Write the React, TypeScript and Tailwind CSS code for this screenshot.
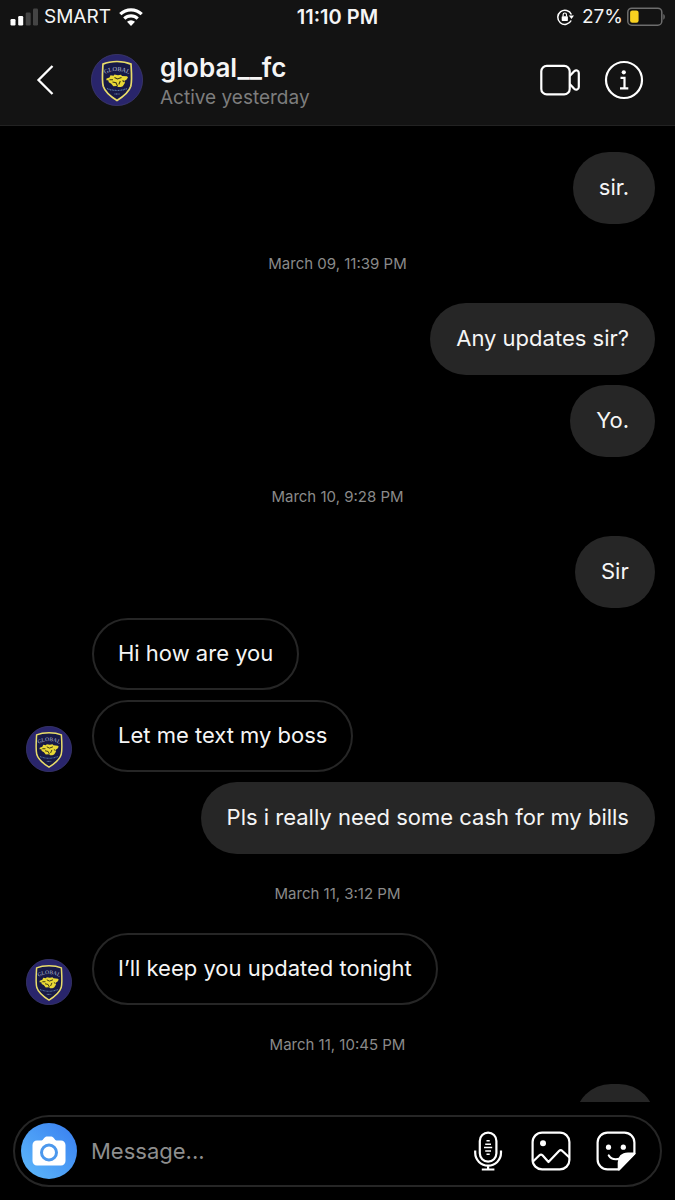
import * as React from "react";

type Message = {
    id: number;
    from?: "me" | "them";
    text?: string;
    date?: string;
    avatar?: boolean;
};

const messages: Message[] = [
    {id: 1, from: "me", text: "sir."},
    {id: 2, date: "March 09, 11:39 PM"},
    {id: 3, from: "me", text: "Any updates sir?"},
    {id: 4, from: "me", text: "Yo."},
    {id: 5, date: "March 10, 9:28 PM"},
    {id: 6, from: "me", text: "Sir"},
    {id: 7, from: "them", text: "Hi how are you"},
    {id: 8, from: "them", text: "Let me text my boss", avatar: true},
    {id: 9, from: "me", text: "Pls i really need some cash for my bills"},
    {id: 10, date: "March 11, 3:12 PM"},
    {id: 11, from: "them", text: "I’ll keep you updated tonight", avatar: true},
    {id: 12, date: "March 11, 10:45 PM"},
    {id: 13, from: "me", text: ""},
];

const ClubBadge = ({className}: {className: string}) => {
    const arcId = React.useId();
    return (
        <svg viewBox="0 0 52 52" className={className} aria-hidden="true">
            <circle cx="26" cy="26" r="25.6" fill="#29256b" stroke="#3d3a70" strokeWidth=".8"/>
            <path
                d="M26 7.500c-5.500 0-10 .8-14 2.600-.6 10-1.200 16.500.2 22.200C14 38 19.500 42.500 26 46.500c6.500-4 12-8.500 13.800-14.200 1.400-5.700.8-12.200.2-22.200-4-1.800-8.500-2.600-14-2.600Z"
                fill="#171947" stroke="#e8dc6a" strokeWidth="1.700"/>
            <path id={arcId} d="M13.500 20.500Q26 13.500 38.500 20.500" fill="none"/>
            <text fontSize="6.200" fill="#b9bfd6" textAnchor="middle" className="font-['Liberation_Serif',serif]">
                <textPath href={`#${arcId}`} startOffset="50%">GLOBAL</textPath>
            </text>
            <path
                d="M15.500 24.500l3-1 1-2.200 3 .5 1-1.300 3.500.8 3-.6 1 1.200 5 .3 1 1.300-2 2.800-1.300 0 .3 2.500-2.200 3.500-2 .7-2.500 0-1.500-1-3.500.3-2-2.500-2.500-1.500-.5-2-2 0Z"
                fill="#e9d936"/>
            <path d="M18.500 25.700h3.500M23.500 23.500l3 1.500 4-1.500M21.500 28l3.500.8 1.500 3.200M29.300 27l-1.500 3.500M31.500 26.500l2 1.500" fill="none" stroke="#3b3719" strokeWidth="1.100"/>
            <path d="M16 34.500Q26 38.500 36 34.500" fill="none" stroke="#5878a8" strokeWidth="1.200" strokeDasharray="1 .6"/>
            <path d="M23.500 40h5" stroke="#6f8ab0" strokeWidth="1" strokeDasharray="1 .5"/>
        </svg>
    );
};

const StatusBar = () => (
    <div className="grid h-[34px] grid-cols-[1fr_auto_1fr] items-center px-[10px] text-[19px] leading-6">
        <div className="flex items-center gap-1.5">
            <svg viewBox="0 0 28 18" className="h-[18px] w-7" aria-label="Signal">
                <rect x=".5" y="11" width="5" height="6.500" rx="1.200" fill="#fff"/>
                <rect x="8.200" y="8" width="5" height="9.500" rx="1.200" fill="#fff"/>
                <rect x="15.700" y="4.500" width="5" height="13" rx="1.200" fill="#444"/>
                <rect x="23" y=".5" width="5" height="17" rx="1.200" fill="#444"/>
            </svg>
            <span>SMART</span>
            <svg viewBox="0 0 24 18" className="ml-0.5 h-[18px] w-6" aria-label="Wi-Fi">
                <g fill="none" stroke="#fff" strokeWidth="3.200">
                    <path d="M1.300 6.200a15.300 15.300 0 0 1 21.400 0"/>
                    <path d="M5.300 10.600a9.600 9.600 0 0 1 13.400 0"/>
                </g>
                <path d="M12 18l-4-4.200a5.700 5.700 0 0 1 8 0Z" fill="#fff"/>
            </svg>
        </div>
        <time className="text-[20px] font-semibold">11:10 PM</time>
        <div className="flex items-center justify-end gap-1">
            <svg viewBox="0 0 18 18" className="mr-1 h-[18px] w-[18px]" aria-label="Rotation lock">
                <path d="M15.400 6.500A7.100 7.100 0 1 0 15.200 12.500" fill="none" stroke="#fff" strokeWidth="1.500"/>
                <path d="M12.800 7.600h5.200L15.500 11Z" fill="#fff"/>
                <rect x="5.700" y="8.200" width="6.200" height="4.800" rx=".7" fill="#fff"/>
                <path d="M7.100 8.500V6.700a1.700 1.700 0 0 1 3.400 0v1.800" fill="none" stroke="#fff" strokeWidth="1.200"/>
            </svg>
            <span>27%</span>
            <svg viewBox="0 0 38 20" className="h-5 w-[38px]" aria-label="Battery">
                <rect x=".8" y="1.200" width="34" height="17" rx="4" fill="none" stroke="#6d6d6d" strokeWidth="1.500"/>
                <rect x="3.100" y="3.600" width="8.500" height="12.200" rx="2.200" fill="#f8d120"/>
                <path d="M36.300 7c2 .7 2 5 0 5.700Z" fill="#6d6d6d"/>
            </svg>
        </div>
    </div>
);

const ChatHeader = () => (
    <div className="flex h-[91px] items-center px-[31px]">
        <button type="button" aria-label="Back" className="flex h-10 w-[60px] items-center">
            <svg viewBox="0 0 26 32" className="h-8 w-[26px]" fill="none" stroke="#fff" strokeWidth="2.300">
                <path d="M21.500 2 7.500 16l14 14"/>
            </svg>
        </button>
        <ClubBadge className="h-13 w-13 shrink-0"/>
        <div className="ml-[17px] min-w-0 flex-1 pt-1">
            <h1 className="text-[26px] leading-8 font-semibold">global__fc</h1>
            <p className="text-[19px] leading-7 text-[#7d7d7d]">Active yesterday</p>
        </div>
        <div className="flex items-center gap-6">
            <button type="button" aria-label="Video call">
                <svg viewBox="0 0 40 40" className="h-10 w-10" fill="none" stroke="#fff" strokeWidth="2.200" strokeLinejoin="round">
                    <rect x="1.300" y="5.800" width="28.400" height="28.600" rx="5.500"/>
                    <path d="M29.700 16l4.500-4.700c1.800-1.700 4.600-1 4.600 1.600v14.200c0 2.600-2.800 3.300-4.600 1.600L29.700 24"/>
                </svg>
            </button>
            <button type="button" aria-label="Details">
                <svg viewBox="0 0 40 40" className="h-10 w-10" fill="none" stroke="#fff">
                    <circle cx="20" cy="20" r="18" strokeWidth="2.200"/>
                    <circle cx="19.800" cy="12.300" r="2.100" fill="#fff" stroke="none"/>
                    <path d="M16.500 17.800h4V28M16 28.300h8.300" strokeWidth="2.200"/>
                </svg>
            </button>
        </div>
    </div>
);

const MessageRow = ({data}: {data: Message}) => {
    if (data.from === "me") {
        return (
            <div className="flex shrink-0 justify-end">
                <p className="h-18 min-w-20 rounded-[36px] bg-[#262626] px-[26px] pt-5 text-[22px] leading-[30px]">
                    {data.text}
                </p>
            </div>
        );
    }
    return (
        <div className="flex shrink-0 items-end gap-5">
            <div className="w-[46px] shrink-0">
                {data.avatar && <ClubBadge className="h-[46px] w-[46px]"/>}
            </div>
            <p className="h-18 rounded-[36px] border-2 border-[#262626] px-6 pt-[18px] text-[22px] leading-[30px]">
                {data.text}
            </p>
        </div>
    );
};

const Composer = () => (
    <footer className="shrink-0 px-[13px] py-[13px]">
        <form className="flex h-18 items-center rounded-full border-2 border-[#262626] pr-6 pl-1.5" onSubmit={(e) => e.preventDefault()}>
            <button type="button" aria-label="Camera"
                    className="flex h-14 w-14 shrink-0 items-center justify-center rounded-full bg-linear-to-tr from-[#60bafa] to-[#397df0]">
                <svg viewBox="0 0 34 30" className="h-[30px] w-[34px]">
                    <path d="M5 4.500h4.500c1.500 0 3-4 5-4h5c2 0 3.500 4 5 4H29c2.500 0 4.500 2 4.500 4.500v16c0 2.500-2 4.500-4.500 4.500H5C2.500 29.500.5 27.500.5 25V9C.5 6.500 2.500 4.500 5 4.500Z" fill="#fff"/>
                    <circle cx="17" cy="16.500" r="7.500" fill="none" stroke="#4c98ed" strokeWidth="3"/>
                </svg>
            </button>
            <input type="text" aria-label="Message" placeholder="Message..."
                   className="ml-3.5 h-10 min-w-0 flex-1 bg-transparent text-[22px] outline-none placeholder:text-[#8e8e8e]"/>
            <div className="flex items-center gap-[25px]">
                <button type="button" aria-label="Voice message">
                    <svg viewBox="2 0 36 40" className="h-10 w-9" fill="none" stroke="#fff" strokeWidth="2.200">
                        <rect x="11.800" y="1.600" width="16.600" height="29" rx="8.300"/>
                        <path d="M7.200 19.500v2.300a12.900 12.900 0 0 0 25.800 0v-2.300M20.100 34.700v3.500M13.800 38.500h12.600"/>
                        <path d="M18.500 9.800h3.200M17.200 13.200h5.800M16 16.600h8.200M17.200 20h5.800M18.500 23.200h3.200" strokeWidth="1.500"/>
                    </svg>
                </button>
                <button type="button" aria-label="Photo library">
                    <svg viewBox="0 0 40 40" className="h-10 w-10" fill="none" stroke="#fff" strokeWidth="2.200" strokeLinejoin="round">
                        <rect x="1.600" y="1.600" width="36.800" height="36.800" rx="9.500"/>
                        <circle cx="12" cy="12.300" r="3" fill="#fff" stroke="none"/>
                        <path d="M2 30.500l6.500-6.300c1-.9 2-.9 3 0l6 6.800 10.500-11c1.200-1.200 2.200-1.200 3.400 0l7 6.500"/>
                    </svg>
                </button>
                <button type="button" aria-label="Stickers">
                    <svg viewBox="0 0 40 40" className="h-10 w-10" fill="none" stroke="#fff" strokeWidth="2.200" strokeLinejoin="round">
                        <path d="M22.800 38.400H11.500A9.900 9.900 0 0 1 1.600 28.500v-17A9.900 9.900 0 0 1 11.500 1.600h17a9.900 9.900 0 0 1 9.900 9.900V22.500L22.800 38.400Z"/>
                        <path d="M38.400 22.500h-6.500c-6 0-9.100 4-9.100 9v6.900Z" fill="#fff"/>
                        <circle cx="12.500" cy="16.200" r="2.600" fill="#fff" stroke="none"/>
                        <circle cx="27.300" cy="16.200" r="2.600" fill="#fff" stroke="none"/>
                        <path d="M12.800 24.500c2 3.200 6 4.400 10.500 3.300" strokeLinecap="round"/>
                    </svg>
                </button>
            </div>
        </form>
    </footer>
);

export default function App() {
    return (
        <div className="flex h-screen flex-col bg-black font-['Inter','Liberation_Sans',sans-serif] text-[#f5f5f5]">
            <header className="shrink-0 border-b border-[#222] bg-[#131313]">
                <StatusBar/>
                <ChatHeader/>
            </header>
            <main className="min-h-0 flex-1 overflow-hidden pt-[26px]">
                {messages.map((message, index) =>
                    message.date ? (
                        <div key={message.id} className="flex h-[79px] items-center justify-center">
                            <time className="text-[15px] leading-5 text-[#8a8a8a]">{message.date}</time>
                        </div>
                    ) : (
                        <div key={message.id} className={index > 0 && messages[index - 1].from ? "mt-2.5 pr-5 pl-[26px]" : "pr-5 pl-[26px]"}>
                            <MessageRow data={message}/>
                        </div>
                    )
                )}
            </main>
            <Composer/>
        </div>
    );
}
